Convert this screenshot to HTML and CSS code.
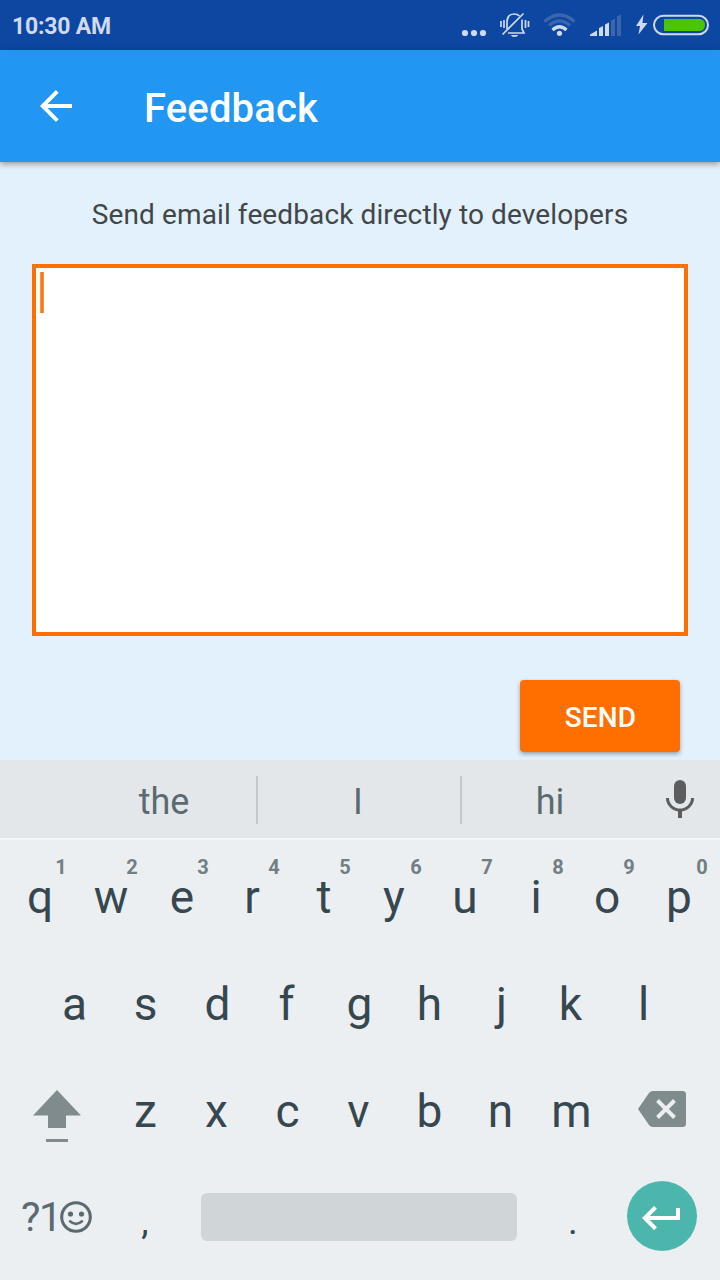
FILE: index.html
```html
<!DOCTYPE html>
<html lang="en">
<head>
<meta charset="utf-8">
<title>Feedback</title>
<link rel="stylesheet" href="styles.css">
</head>
<body>
<header class="status-bar">
  <span class="clock">10:30 AM</span>
  <svg class="status-icons" width="260" height="50" viewBox="0 0 260 50" aria-hidden="true">
    <g fill="#cfdaed">
      <circle cx="5" cy="33" r="3.1"/><circle cx="14" cy="33" r="3.1"/><circle cx="23" cy="33" r="3.1"/>
    </g>
    <g fill="none" stroke="#cfdaed" stroke-width="1.7">
      <path d="M47 29V21.500Q47.500 14 54 14Q57.500 14 59.500 16M62 19.500V29L64 33H48M42.500 34.500L63.500 13.500M41 21V27M44 20V28M65.500 20V28M68.500 21V27"/>
      <path d="M51.500 35.500H57.500L56.500 36.300H52.500Z" stroke-width="1"/>
    </g>
    <g fill="none" stroke-width="3.200">
      <path d="M84.500 21.500Q99.500 8.500 114.500 21.500M89 25.500Q99.500 16.500 110 25.500" stroke="#3b66ad"/>
      <path d="M92.500 30Q99.500 23.500 106.500 30" stroke="#cfdaed"/>
    </g>
    <circle cx="99.500" cy="33.300" r="2.600" fill="#cfdaed"/>
    <path d="M130 36V34.500L137 30.500V36ZM139 36V28L143 26V36ZM145 36V24.500L149 22.500V36Z" fill="#cfdaed"/>
    <path d="M151 36V20.500L155 18.500V36ZM157 36V16.500L161 14.500V36Z" fill="#3b66ad"/>
    <path d="M183.500 14.500L176 26H180L178.500 34.500L187.500 23H182.500Z" fill="#cfdaed"/>
    <rect x="194" y="15.700" width="54" height="18.600" rx="9.300" fill="none" stroke="#cfdaed" stroke-width="2"/>
    <path d="M204 19H239.500Q245 19.500 245 25T239.500 31H204Z" fill="#4bc400"/>
  </svg>
</header>

<div class="app-bar">
  <svg class="back" width="32" height="32" viewBox="0 0 32 32" role="img" aria-label="Back">
    <path d="M32 16H3M17.300 1.400L2.700 16L17.300 30.600" fill="none" stroke="#fff" stroke-width="3.900"/>
  </svg>
  <h1 class="title">Feedback</h1>
</div>

<main class="content">
  <p class="hint">Send email feedback directly to developers</p>
  <div class="editor"><div class="caret"></div></div>
  <button class="send">SEND</button>
</main>

<section class="keyboard">
  <div class="suggestions">
    <span class="word word-first">the</span>
    <span class="word word-middle">I</span>
    <span class="word word-last">hi</span>
    <svg class="mic" width="28" height="38" viewBox="0 0 28 38" role="img" aria-label="Voice input">
      <rect x="8" y="0" width="12" height="24" rx="6" fill="#5b5d5e"/>
      <path d="M1.500 18a12.500 12 0 0 0 25 0" fill="none" stroke="#5b5d5e" stroke-width="3"/>
      <path d="M14 30V38" stroke="#5b5d5e" stroke-width="4"/>
    </svg>
  </div>
  <div class="keys">
    <div class="row">
      <span class="key">q<sup class="digit">1</sup></span><span class="key">w<sup class="digit">2</sup></span><span class="key">e<sup class="digit">3</sup></span><span class="key narrow">r<sup class="digit">4</sup></span><span class="key">t<sup class="digit">5</sup></span><span class="key narrow">y<sup class="digit">6</sup></span><span class="key narrow">u<sup class="digit">7</sup></span><span class="key narrow">i<sup class="digit">8</sup></span><span class="key narrow">o<sup class="digit">9</sup></span><span class="key">p<sup class="digit digit-last">0</sup></span>
    </div>
    <div class="row">
      <span class="key narrow">a</span><span class="key narrow">s</span><span class="key">d</span><span class="key narrower">f</span><span class="key">g</span><span class="key narrow">h</span><span class="key">j</span><span class="key narrower">k</span><span class="key">l</span>
    </div>
    <div class="row">
      <span class="key key-wide shift">
        <svg width="48" height="52" viewBox="0 0 48 52" role="img" aria-label="Shift">
          <path d="M24 0L48 25.500H33V38H15V25.500H0ZM13 49H35V52H13Z" fill="#808b8e"/>
        </svg>
      </span>
      <span class="key narrow">z</span><span class="key narrow">x</span><span class="key narrow">c</span><span class="key narrow">v</span><span class="key narrow">b</span><span class="key narrow">n</span><span class="key narrow">m</span>
      <span class="key key-wide backspace">
        <svg width="48" height="36" viewBox="0 0 48 36" role="img" aria-label="Backspace">
          <path d="M15 0H44.500Q48 0 48 3.500V32.500Q48 36 44.500 36H15Q12.500 36 11 34L0 18L11 2Q12.500 0 15 0Z" fill="#808b8e"/>
          <path d="M19.500 9.500L36.500 26.500M36.500 9.500L19.500 26.500" stroke="#ebeff2" stroke-width="3.900"/>
        </svg>
      </span>
    </div>
    <div class="row row-bottom">
      <span class="symbols">?1<svg width="32" height="32" viewBox="0 0 32 32" role="img" aria-label="Emoji">
          <circle cx="16" cy="16" r="14.300" fill="none" stroke="#5b6a70" stroke-width="3"/>
          <circle cx="10.500" cy="13" r="2.600" fill="#5b6a70"/><circle cx="21.500" cy="13" r="2.600" fill="#5b6a70"/>
          <path d="M10 20.300Q16 25.500 22 20.300" fill="none" stroke="#5b6a70" stroke-width="2.600" stroke-linecap="round"/>
        </svg></span>
      <span class="key punctuation">,</span>
      <span class="space"></span>
      <span class="key punctuation period">.</span>
      <span class="enter">
        <svg width="38" height="24" viewBox="0 0 38 24" role="img" aria-label="Enter">
          <path d="M36 2V12H3M13.500 1.300L2.800 12L13.500 22.700" fill="none" stroke="#fff" stroke-width="4"/>
        </svg>
      </span>
    </div>
  </div>
</section>
</body>
</html>
```
FILE: styles.css
```css
* { box-sizing: border-box; }

body {
  margin: 0;
  width: 720px;
  height: 1280px;
  overflow: hidden;
  display: flex;
  flex-direction: column;
  background: #e3f1fd;
  font-family: Roboto, sans-serif;
}

.status-bar {
  height: 50px;
  flex: none;
  display: flex;
  align-items: center;
  justify-content: space-between;
  padding-left: 12px;
  background: #0e47a1;
  color: #cfdaed;
}

.clock {
  font-size: 23px;
  font-weight: 700;
  letter-spacing: -.2px;
  padding-top: 2px;
}

.app-bar {
  height: 112px;
  flex: none;
  display: flex;
  align-items: center;
  gap: 72px;
  padding-left: 40px;
  background: #2196f3;
  color: #fff;
  box-shadow: 0 2px 6px rgba(0, 0, 0, .38);
}

.title {
  margin: 0;
  padding-top: 4px;
  font-size: 40px;
  font-weight: 500;
  letter-spacing: .15px;
}

.content {
  height: 598px;
  flex: none;
  padding: 35px 32px 0;
  display: flex;
  flex-direction: column;
}

.hint {
  margin: 0 0 32px;
  line-height: 35px;
  font-size: 28px;
  letter-spacing: .11px;
  text-align: center;
  color: #424649;
}

.editor {
  height: 372px;
  padding: 4px;
  border: 4px solid #ff6f00;
  background: #fff;
}

.caret {
  width: 4px;
  height: 41px;
  background: linear-gradient(90deg, #ffa45f, #ff7105 40%, #ff7105 60%, #ffa45f);
}

.send {
  align-self: flex-end;
  width: 160px;
  height: 72px;
  margin: 44px 8px 0 0;
  padding: 2px 0 0 1px;
  border: 0;
  border-radius: 4px;
  background: #ff6f00;
  box-shadow: 0 2px 4px rgba(0, 0, 0, .35);
  color: #fff;
  font: 500 28px Roboto, sans-serif;
  letter-spacing: .15px;
}

.keyboard {
  height: 520px;
  background: #ebeff2;
}

.suggestions {
  height: 80px;
  display: flex;
  align-items: center;
  padding-top: 2px;
  background: #e3e7ea;
  border-bottom: 2px solid #f5f7f8;
  font-size: 36px;
  color: #5b6a70;
}

.word {
  height: 48px;
  line-height: 52px;
  text-align: center;
}

.word-first { width: 258px; padding-left: 72px; border-right: 2px solid #c3c8cb; }
.word-middle { width: 204px; padding-right: 2px; border-right: 2px solid #c3c8cb; }
.word-last { width: 176px; }
.mic { margin: 0 0 2px 28px; }

.keys { padding-top: 4px; }

.row {
  height: 107px;
  display: flex;
  justify-content: center;
  align-items: center;
}

.key {
  position: relative;
  width: 71px;
  padding-right: 1px;
  line-height: 107px;
  text-align: center;
  font-size: 46px;
  color: #37474f;
}

.narrow { padding-right: 3px; }
.narrower { padding-right: 5px; }

.digit {
  position: absolute;
  top: 11px;
  left: 46px;
  width: 20px;
  line-height: 24px;
  font-size: 20px;
  font-weight: 700;
  color: #727e83;
}

.digit-last { left: 48px; }

.key-wide {
  width: 111px;
  display: flex;
  align-items: center;
}

.shift { padding: 8px 0 0 32px; height: 107px; }
.backspace { padding: 0 0 5px 29px; height: 107px; }

.row-bottom {
  justify-content: flex-start;
  padding-bottom: 4px;
}

.symbols {
  width: 110px;
  padding-left: 21px;
  display: flex;
  align-items: center;
  font-size: 41px;
  letter-spacing: -1.5px;
  color: #5b6a70;
}

.punctuation {
  height: 107px;
  padding-top: 5px;
  font-size: 37px;
}

.space {
  width: 316px;
  height: 48px;
  margin-left: 20px;
  border-radius: 6px;
  background: #d0d5d8;
}

.period { margin-left: 21px; }

.enter {
  width: 70px;
  height: 70px;
  margin: 0 0 2px 18px;
  border-radius: 50%;
  display: flex;
  align-items: center;
  justify-content: center;
  padding: 4px 2px 0 0;
  background: #4db6ac;
}
```
